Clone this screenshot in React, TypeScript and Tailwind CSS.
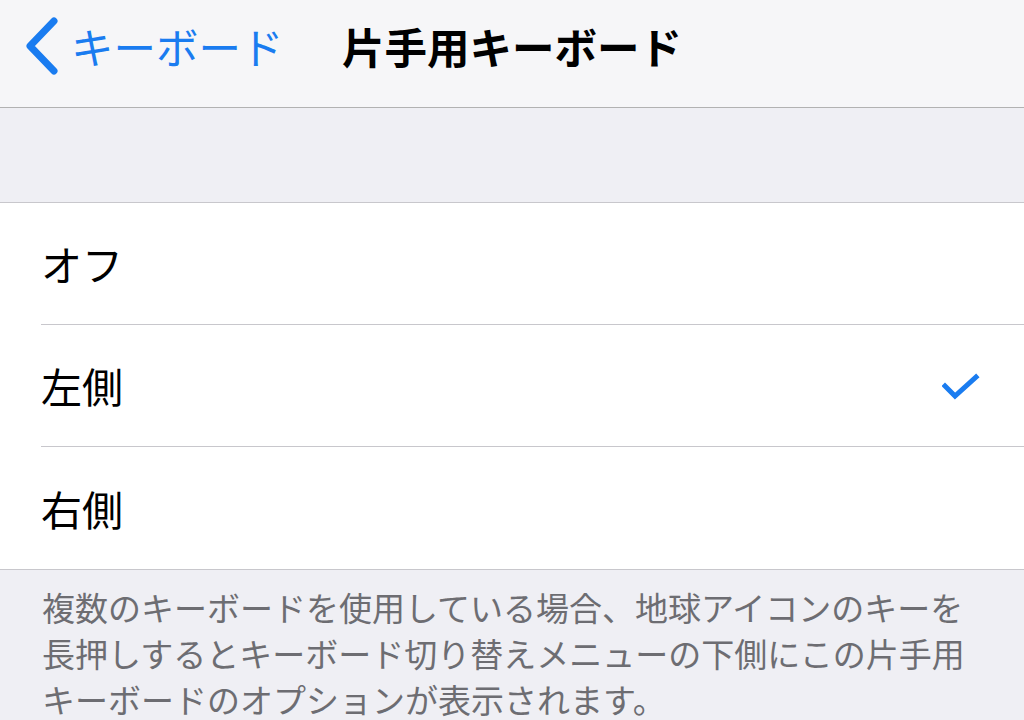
import React from "react";

const font = { fontFamily: '"Noto Sans CJK JP", "Noto Sans", sans-serif' };

function Row({ label, checked, last }: { label: string; checked?: boolean; last?: boolean }) {
  return (
    <div className="pl-[41px] bg-white">
      <div className={`h-[122px] flex items-center justify-between pr-[44px] ${last ? "" : "border-b border-[#c8c7cc]"}`}>
        <span className="text-[41px] leading-none text-black">{label}</span>
        {checked && (
          <svg width="38" height="28" viewBox="0 0 38 28" className="mt-[2px]">
            <polyline points="3,13 13,23 34,4" fill="none" stroke="#1a7cf0" strokeWidth="5" strokeLinecap="square" />
          </svg>
        )}
      </div>
    </div>
  );
}

export default function App() {
  return (
    <div className="w-[1024px] h-[720px] overflow-hidden bg-[#efeff4]" style={font}>
      <div className="h-[108px] bg-[#f6f6f8] border-b border-[#b2b2b2] grid grid-cols-[1fr_auto_1fr] items-start pt-[17px]">
        <div className="flex items-center pl-[25px]">
          <svg width="34" height="58" viewBox="0 0 34 58">
            <polyline points="29,4 5,29 29,54" fill="none" stroke="#1a7cf0" strokeWidth="7" strokeLinecap="round" strokeLinejoin="round" />
          </svg>
          <span className="ml-[12px] text-[42.5px] leading-[58px] text-[#1a7cf0]">キーボード</span>
        </div>
        <div className="text-[42.5px] leading-[58px] font-bold text-black">片手用キーボード</div>
        <div />
      </div>
      <div className="h-[95px] border-b border-[#c8c7cc]" />
      <Row label="オフ" />
      <Row label="左側" checked />
      <Row label="右側" last />
      <div className="border-t border-[#c8c7cc] pt-[14px] pl-[42px] pr-[20px] text-[33px] leading-[46px] text-[#6d6d72]">
        <div>複数のキーボードを使用している場合、地球アイコンのキーを</div>
        <div>長押しするとキーボード切り替えメニューの下側にこの片手用</div>
        <div>キーボードのオプションが表示されます。</div>
      </div>
    </div>
  );
}
